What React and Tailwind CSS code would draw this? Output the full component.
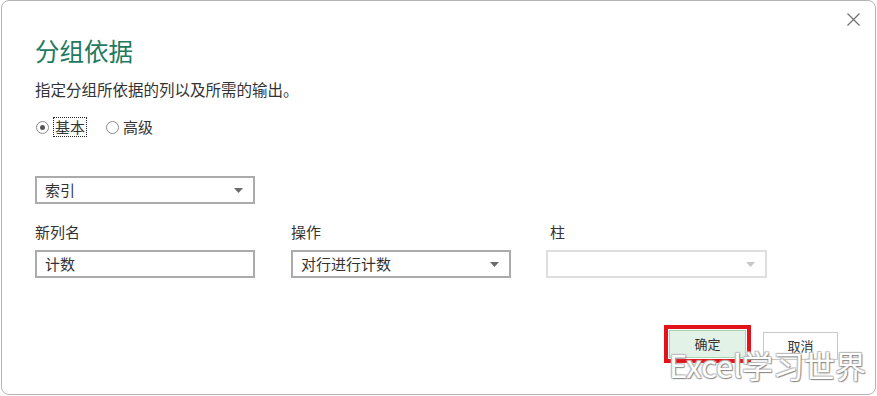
import React, { useState } from 'react';

const font = { fontFamily: '"Noto Sans CJK SC", "Noto Sans", sans-serif' };

const Caret = ({ muted }) => (
  <svg width="9" height="5" viewBox="0 0 9 5" className="shrink-0">
    <path d="M0 0 L9 0 L4.5 5 Z" fill={muted ? '#c8c8c8' : '#6b6b6b'} />
  </svg>
);

const Select = ({ value, disabled, className = '' }) => (
  <div className={`h-[28px] flex items-center justify-between pl-[8px] pr-[10px] border-2 ${disabled ? 'border-[#dedede] bg-white' : 'border-[#ababab] bg-white'} ${className}`}>
    <span className="text-[15px] text-[#333]">{value}</span>
    <Caret muted={disabled} />
  </div>
);

const App = () => {
  const [mode, setMode] = useState('basic');

  return (
    <div className="w-[877px] h-[396px] bg-white overflow-hidden" style={font}>
      <div className="relative ml-[1px] w-[875px] h-[395px] border border-[#b4b4b4] rounded-[8px] bg-white">
        {/* close */}
        <button className="absolute right-[14px] top-[10px] w-[16px] h-[16px] flex items-center justify-center">
          <svg width="13" height="13" viewBox="0 0 13 13">
            <path d="M0.5 0.5 L12.5 12.5 M12.5 0.5 L0.5 12.5" stroke="#6f6f6f" strokeWidth="1.2" />
          </svg>
        </button>

        <div className="pl-[33px] pt-[34px]">
          <h1 className="text-[24.5px] leading-[32px] text-[#1f7a5f] font-normal">分组依据</h1>
          <p className="mt-[12px] text-[15.5px] leading-[20px] text-[#333]">指定分组所依据的列以及所需的输出。</p>

          <div className="mt-[18px] flex items-center text-[15px] text-[#333]">
            <label className="flex items-center cursor-pointer" onClick={() => setMode('basic')}>
              <span className="w-[13px] h-[13px] ml-[1px] rounded-full border border-[#8a8a8a] flex items-center justify-center">
                {mode === 'basic' && <span className="w-[5px] h-[5px] rounded-full bg-[#555]" />}
              </span>
              <span className="ml-[4px] px-[1px] leading-[18px] border border-dotted border-[#222]">基本</span>
            </label>
            <label className="ml-[19px] flex items-center cursor-pointer" onClick={() => setMode('advanced')}>
              <span className="w-[13px] h-[13px] rounded-full border border-[#8a8a8a] flex items-center justify-center">
                {mode === 'advanced' && <span className="w-[5px] h-[5px] rounded-full bg-[#555]" />}
              </span>
              <span className="ml-[4px] leading-[18px]">高级</span>
            </label>
          </div>

          <Select value="索引" className="mt-[39px] w-[220px]" />

          <div className="mt-[18px] flex gap-[36px]">
            <div className="w-[220px]">
              <div className="text-[15px] leading-[20px] text-[#333]">新列名</div>
              <div className="mt-[8px] h-[28px] flex items-center pl-[8px] border-2 border-[#ababab] text-[15px] text-[#333]">计数</div>
            </div>
            <div className="w-[220px]">
              <div className="text-[15px] leading-[20px] text-[#333]">操作</div>
              <Select value="对行进行计数" className="mt-[8px]" />
            </div>
            <div className="w-[220px]">
              <div className="pl-[3px] text-[15px] leading-[20px] text-[#333]">柱</div>
              <Select value="" disabled className="mt-[8px] -ml-[1px]" />
            </div>
          </div>
        </div>

        <div className="absolute right-[124px] top-[324px] border-[4px] border-[#e3131b] p-[1px]">
          <button className="w-[77px] h-[28px] border border-[#a8d5b7] bg-[#e2f2e7] text-[13px] text-[#333]">确定</button>
        </div>
        <button className="absolute right-[37px] top-[331px] w-[75px] h-[28px] border border-[#c8c8c8] bg-white text-[13px] text-[#333]">取消</button>

        {/* watermark */}
        <div
          className="absolute left-[667px] top-[344px] text-[31px] leading-[40px] text-white pointer-events-none whitespace-nowrap"
          style={{ textShadow: '1px 1px 1px #8a8a8a, -1px -1px 1px #bdbdbd, 1px -1px 1px #bdbdbd, -1px 1px 1px #bdbdbd' }}
        >
          Excel学习世界
        </div>
      </div>
    </div>
  );
};

export default App;
